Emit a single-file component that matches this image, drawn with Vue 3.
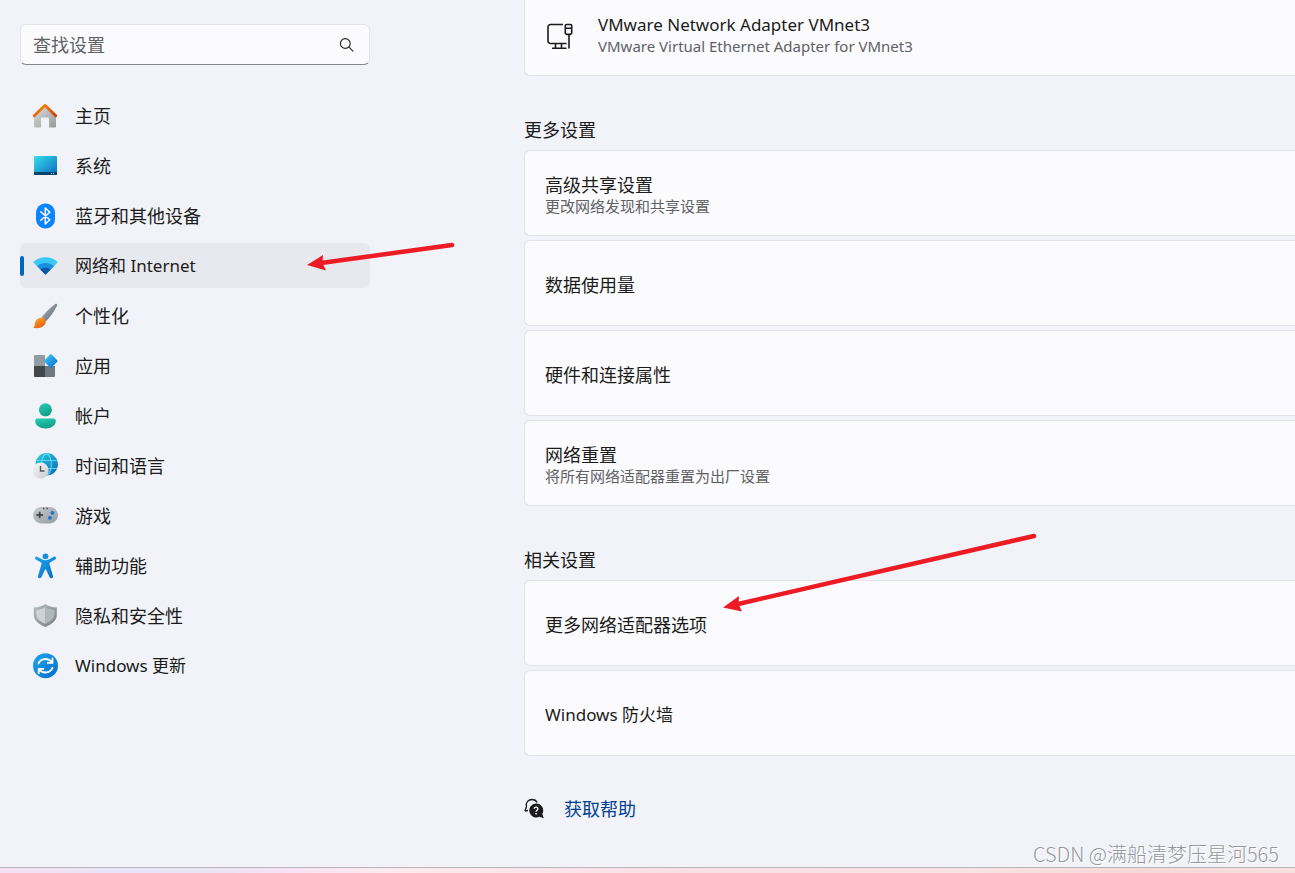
<script setup>
import { ref } from 'vue'

// 搜索关键字
const keyword = ref('')

// 当前选中的菜单
const active = ref('network')

// 左侧菜单
const menus = [
  { key: 'home', label: '主页' },
  { key: 'system', label: '系统' },
  { key: 'bluetooth', label: '蓝牙和其他设备' },
  { key: 'network', label: '网络和 Internet', latin: true },
  { key: 'personal', label: '个性化' },
  { key: 'apps', label: '应用' },
  { key: 'account', label: '帐户' },
  { key: 'time', label: '时间和语言' },
  { key: 'game', label: '游戏' },
  { key: 'access', label: '辅助功能' },
  { key: 'privacy', label: '隐私和安全性' },
  { key: 'update', label: 'Windows 更新', latin: true }
]

// 右侧设置分组
const groups = [
  {
    title: '更多设置',
    items: [
      { title: '高级共享设置', desc: '更改网络发现和共享设置' },
      { title: '数据使用量' },
      { title: '硬件和连接属性' },
      { title: '网络重置', desc: '将所有网络适配器重置为出厂设置' }
    ]
  },
  {
    title: '相关设置',
    items: [
      { title: '更多网络适配器选项' },
      { title: 'Windows 防火墙', latin: true }
    ]
  }
]
</script>

<template>
  <div class="settings-page">
    <div class="settings-body">
      <aside class="sidebar">
        <form class="search-box" @submit.prevent>
          <input v-model="keyword" class="search-input" type="text" placeholder="查找设置" aria-label="查找设置" />
          <button class="search-button" type="submit" aria-label="查找">
            <svg width="16" height="16" viewBox="0 0 16 16" fill="none" stroke="#1f1f1f" stroke-width="1.1" stroke-linecap="round">
              <circle cx="6.3" cy="6.5" r="4.9" />
              <path d="M9.900 10.100L14 14.100" />
            </svg>
          </button>
        </form>

        <nav class="menu">
          <a
            v-for="item in menus"
            :key="item.key"
            href="#"
            class="menu-item"
            :class="{ active: active === item.key, latin: item.latin }"
            @click.prevent="active = item.key"
          >
            <svg v-if="item.key === 'home'" class="menu-icon" viewBox="0 0 26 26">
              <defs>
                <linearGradient id="homeWall" x1="0" y1="0" x2="1" y2="1">
                  <stop offset="0" stop-color="#dedede" />
                  <stop offset="1" stop-color="#999" />
                </linearGradient>
                <linearGradient id="homeRoof" x1="0" y1="0" x2="1" y2="1">
                  <stop offset="0" stop-color="#f9940e" />
                  <stop offset="1" stop-color="#d13c02" />
                </linearGradient>
              </defs>
              <path d="M2 12.500L13 2l11 10.500V23.500a1 1 0 0 1-1 1H17V15.500a1 1 0 0 0-1-1h-6a1 1 0 0 0-1 1v9H3a1 1 0 0 1-1-1z" fill="url(#homeWall)" />
              <path d="M2.200 12.800L13 2.200l10.800 10.600" fill="none" stroke="url(#homeRoof)" stroke-width="2.800" stroke-linecap="round" stroke-linejoin="round" />
            </svg>

            <svg v-else-if="item.key === 'system'" class="menu-icon" viewBox="0 0 26 26">
              <defs>
                <linearGradient id="sysScreen" x1="0" y1="0" x2="1" y2="1">
                  <stop offset="0" stop-color="#36dfe8" />
                  <stop offset="1" stop-color="#0b69c4" />
                </linearGradient>
              </defs>
              <rect x="2" y="3" width="23" height="19" rx="1" fill="url(#sysScreen)" />
              <path d="M2 19h23v2a1 1 0 0 1-1 1H3a1 1 0 0 1-1-1z" fill="#0c4368" />
              <path d="M19 20.500h1M21 20.500h1" stroke="#a6d7ef" />
            </svg>

            <svg v-else-if="item.key === 'bluetooth'" class="menu-icon" viewBox="0 0 26 26">
              <rect x="4" y="0.500" width="19" height="25" rx="9" fill="#0a84ff" />
              <path d="M8.800 8.800l9 8L13.300 21V5l4.500 4.200-9 8" fill="none" stroke="#fff" stroke-width="1.500" stroke-linejoin="round" stroke-linecap="round" />
            </svg>

            <svg v-else-if="item.key === 'network'" class="menu-icon" viewBox="0 0 26 26">
              <path d="M13.500 21.800L1.200 9.200C7.700 2.500 19.300 2.500 25.800 9.200z" fill="#3ac9f5" />
              <path d="M13.500 21.800L5.200 13.200c4.300-4.400 12.300-4.400 16.600 0z" fill="#1b8de0" />
              <path d="M13.500 21.800L8.500 16.600c2.500-2.500 7.500-2.500 10 0z" fill="#0e55a2" />
            </svg>

            <svg v-else-if="item.key === 'personal'" class="menu-icon" viewBox="0 0 26 26">
              <defs>
                <linearGradient id="brushHandle" x1="0" y1="0" x2="1" y2="1">
                  <stop offset="0" stop-color="#b3bbc2" />
                  <stop offset="1" stop-color="#59636d" />
                </linearGradient>
                <linearGradient id="brushTip" x1="0" y1="0" x2="0.600" y2="1">
                  <stop offset="0" stop-color="#ffad35" />
                  <stop offset="1" stop-color="#e8600e" />
                </linearGradient>
              </defs>
              <path d="M23.200 1c1.800-.8 2.600.4 1.700 2.100C22 9 18 14.500 13.700 18.500L9.500 14.500C13.500 9.500 18 4.500 23.200 1z" fill="url(#brushHandle)" />
              <path d="M9.200 14.700c2.600-.2 5 2 4.600 4.600-.7 4.200-6.800 7.200-12.800 5.300 2.500-1.100 1.200-3.700 2.600-6.600 1-2 3-3.200 5.600-3.300z" fill="url(#brushTip)" />
            </svg>

            <svg v-else-if="item.key === 'apps'" class="menu-icon" viewBox="0 0 26 26">
              <defs>
                <linearGradient id="appTile" x1="0" y1="0" x2="1" y2="1">
                  <stop offset="0" stop-color="#41d0fa" />
                  <stop offset="1" stop-color="#0868d3" />
                </linearGradient>
              </defs>
              <path d="M3 2h10v11H2V3a1 1 0 0 1 1-1z" fill="#939ca5" />
              <path d="M2 13h11v11H3a1 1 0 0 1-1-1z" fill="#41464b" />
              <path d="M13 13h10v10a1 1 0 0 1-1 1h-9z" fill="#70777e" />
              <path d="M18 1.400l-5.500 5.800a1.200 1.200 0 0 0 0 1.600l5.500 5.800a1.200 1.200 0 0 0 1.700 0l5.500-5.800a1.200 1.200 0 0 0 0-1.600l-5.500-5.800a1.200 1.200 0 0 0-1.700 0z" fill="url(#appTile)" />
            </svg>

            <svg v-else-if="item.key === 'account'" class="menu-icon" viewBox="0 0 26 26">
              <defs>
                <linearGradient id="person" x1="0" y1="0" x2="0.500" y2="1">
                  <stop offset="0" stop-color="#29cfb4" />
                  <stop offset="1" stop-color="#109e89" />
                </linearGradient>
              </defs>
              <circle cx="13.400" cy="6.800" r="6.500" fill="url(#person)" />
              <path d="M5.500 15.500h16a2.300 2.300 0 0 1 2.300 2.300c0 4.700-4.300 7.700-10.300 7.700S3.200 22.500 3.200 17.800A2.300 2.300 0 0 1 5.500 15.500z" fill="url(#person)" />
            </svg>

            <svg v-else-if="item.key === 'time'" class="menu-icon" viewBox="0 0 26 26">
              <defs>
                <linearGradient id="globe" x1="0" y1="0" x2="1" y2="1">
                  <stop offset="0" stop-color="#2ed0dc" />
                  <stop offset="1" stop-color="#0964bd" />
                </linearGradient>
                <linearGradient id="clock" x1="0" y1="0" x2="1" y2="1">
                  <stop offset="0" stop-color="#f8f8f8" />
                  <stop offset="1" stop-color="#c8cbce" />
                </linearGradient>
              </defs>
              <circle cx="14.700" cy="11.300" r="11.200" fill="url(#globe)" />
              <g fill="none" stroke="#5ed9ef" stroke-width="1.100">
                <ellipse cx="14.500" cy="11.500" rx="4.800" ry="10.600" />
                <path d="M4.500 7.500h20M4 15.500h21" />
              </g>
              <circle cx="8.700" cy="17.500" r="8" fill="url(#clock)" />
              <path d="M8.500 13v5h4" fill="none" stroke="#50565c" stroke-width="1.400" />
            </svg>

            <svg v-else-if="item.key === 'game'" class="menu-icon" viewBox="0 0 26 26">
              <defs>
                <linearGradient id="pad" x1="0" y1="0" x2="1" y2="1">
                  <stop offset="0" stop-color="#c8ccd0" />
                  <stop offset="1" stop-color="#939ba2" />
                </linearGradient>
              </defs>
              <rect x="1" y="4" width="25" height="16.500" rx="8.200" fill="url(#pad)" />
              <path d="M4.400 12h6.600M7.700 8.700v6.600" stroke="#454b50" stroke-width="1.800" />
              <circle cx="20.400" cy="9.800" r="1.900" fill="#1379cf" />
              <circle cx="17.900" cy="14.800" r="1.900" fill="#1379cf" />
              <path d="M11 5.500h1.400M14.500 5.500h1.400" stroke="#454b50" stroke-width="1.400" />
            </svg>

            <svg v-else-if="item.key === 'access'" class="menu-icon" viewBox="0 0 26 26">
              <defs>
                <linearGradient id="human" x1="0" y1="0" x2="1" y2="1">
                  <stop offset="0" stop-color="#21a7ed" />
                  <stop offset="1" stop-color="#066cc8" />
                </linearGradient>
              </defs>
              <circle cx="13.500" cy="3.300" r="2.900" fill="#168ede" />
              <path d="M5.200 3.800l5 2.700c2 .9 4.600.9 6.600 0l5-2.700c2-.9 3 1.800 1.400 2.700l-5.200 3c-.5.300-.7.900-.5 1.400l3.500 12c.6 2.300-2.400 3.400-3.400 1.400l-3.500-7.500c-.2-.5-1-.5-1.200 0l-3.500 7.500c-1 2-4 .9-3.400-1.400l3.500-12c.2-.5 0-1.100-.5-1.400l-5.200-3c-1.600-.9-.6-3.600 1.400-2.700z" fill="url(#human)" />
            </svg>

            <svg v-else-if="item.key === 'privacy'" class="menu-icon" viewBox="0 0 26 26">
              <defs>
                <linearGradient id="shield" x1="0" y1="0" x2="1" y2="1">
                  <stop offset="0" stop-color="#b7bdc2" />
                  <stop offset="1" stop-color="#787f85" />
                </linearGradient>
              </defs>
              <path d="M13.300 1c3.200 2.500 6.800 3.300 11.500 3.500V12c0 5.200-4.800 9.500-11.500 12C6.600 21.500 1.800 17.200 1.800 12V4.500C6.500 4.300 10.100 3.500 13.300 1z" fill="url(#shield)" />
              <path d="M13.300 4v16.800C8.300 18.500 4.300 15.700 4.300 11.500V7c3.500-.3 6.500-1.200 9-3z" fill="#d0d3d5" />
              <path d="M13.300 4v16.800c5-2.300 9-5.100 9-9.300V7c-3.500-.3-6.500-1.200-9-3z" fill="#b2b7bb" />
            </svg>

            <svg v-else class="menu-icon" viewBox="0 0 26 26">
              <defs>
                <linearGradient id="refresh" x1="0" y1="0" x2="1" y2="1">
                  <stop offset="0" stop-color="#20a7ed" />
                  <stop offset="1" stop-color="#066ccd" />
                </linearGradient>
              </defs>
              <circle cx="13.500" cy="12.700" r="12.500" fill="url(#refresh)" />
              <g fill="none" stroke="#fff" stroke-width="1.800" stroke-linecap="round" stroke-linejoin="round">
                <path d="M6.500 10.500C8.500 5.300 16 4.300 20 9.200M20.500 5.500v4.400h-4.700" />
                <path d="M20.500 14.800c-2 5.400-9.500 6.400-13.500 1.600M6.700 20.300v-4.500h4.700" />
              </g>
            </svg>
            <span>{{ item.label }}</span>
          </a>
        </nav>
      </aside>

      <main class="content">
        <button class="card adapter-card" type="button">
          <svg class="adapter-icon" width="28" height="28" viewBox="0 0 28 28" fill="none" stroke="#1b1b1b" stroke-width="1.600" stroke-linejoin="round">
            <path d="M18 2.500H5.500A2.500 2.500 0 0 0 3 5v14a2.500 2.500 0 0 0 2.500 2.500H21.500M10.500 21.500v4.500M16.500 21.500v4.500M7 26.200h14.500" />
            <path d="M21.500 2.500h4a1.200 1.200 0 0 1 1.200 1.200v7.500l-1.200 1.200h-4l-1.200-1.200V3.700a1.200 1.200 0 0 1 1.200-1.200zM20.300 6.200h6.400M24 12.500v14" />
          </svg>
          <span class="card-text">
            <span class="card-title latin">VMware Network Adapter VMnet3</span>
            <span class="card-desc">VMware Virtual Ethernet Adapter for VMnet3</span>
          </span>
        </button>

        <section v-for="group in groups" :key="group.title" class="group">
          <h2 class="group-title">{{ group.title }}</h2>
          <div class="card-list">
            <button v-for="item in group.items" :key="item.title" class="card" type="button">
              <span class="card-text">
                <span class="card-title" :class="{ latin: item.latin }">{{ item.title }}</span>
                <span v-if="item.desc" class="card-desc">{{ item.desc }}</span>
              </span>
            </button>
          </div>
        </section>

        <div class="help">
          <svg width="20" height="22" viewBox="0 0 20 22">
            <path d="M1 13l1.500-4.500C1.500 4 4.500 1.500 8 1.500c2.500 0 4.300 1.200 5.200 3M1 13l3-.5" fill="none" stroke="#1b1b1b" stroke-width="1.300" stroke-linejoin="round" />
            <path d="M12 5.500a7 7 0 1 0 3.500 13.200l4.300 1.500-1.500-4.300A7 7 0 0 0 12 5.500z" fill="#1b1b1b" />
            <path d="M10.300 10.800c0-2.300 3.600-2.200 3.600 0 0 1.500-1.800 1.500-1.800 3M12.100 15v1.500" fill="none" stroke="#fff" stroke-width="1.400" />
          </svg>
          <a href="#" class="help-link" @click.prevent>获取帮助</a>
        </div>
      </main>
    </div>

    <div class="bottom-strip"></div>

    <!-- 标注箭头 -->
    <svg class="arrow arrow-menu" width="150" height="32" viewBox="0 0 150 32">
      <path d="M16 22L147 4" stroke="#ed1c24" stroke-width="4.500" stroke-linecap="round" />
      <path d="M2 24L18 14L17.500 22L21 29.500z" fill="#ed1c24" />
    </svg>
    <svg class="arrow arrow-card" width="316" height="80" viewBox="0 0 316 80">
      <path d="M14 72.500L312 4" stroke="#ed1c24" stroke-width="4.500" stroke-linecap="round" />
      <path d="M1 75.500L17 64L16.500 72L20 79.500z" fill="#ed1c24" />
    </svg>
    <div class="watermark">CSDN @满船清梦压星河565</div>
  </div>
</template>

<style>
body {
  margin: 0;
  background: #f1f3f8;
}
</style>

<style scoped>
.settings-page {
  position: relative;
  display: flex;
  flex-direction: column;
  min-height: 100vh;
  overflow: hidden;
  background: #f1f3f8;
  color: #1b1b1b;
  font-family: "Noto Sans", "Noto Sans CJK SC", sans-serif;
  font-size: 18px;
  line-height: 24px;
}

button,
input {
  font: inherit;
  color: inherit;
}

.settings-body {
  display: flex;
  flex: 1;
  gap: 154px;
  padding-left: 20px;
}

.sidebar {
  flex: 0 0 350px;
  padding-top: 24px;
}

.search-box {
  display: flex;
  align-items: center;
  box-sizing: border-box;
  height: 41px;
  padding: 0 14px 0 12px;
  border: 1px solid #e3e4ea;
  border-bottom-color: #85868a;
  border-radius: 6px;
  background: #fbfbfd;
}

.search-input {
  flex: 1;
  min-width: 0;
  padding: 0;
  border: none;
  outline: none;
  background: transparent;
}

.search-input::placeholder {
  color: #606165;
  opacity: 1;
}

.search-button {
  display: flex;
  padding: 0;
  border: none;
  background: transparent;
  cursor: pointer;
}

.menu {
  display: flex;
  flex-direction: column;
  gap: 5px;
  margin-top: 28px;
}

.menu-item {
  position: relative;
  display: flex;
  align-items: center;
  gap: 17px;
  height: 45px;
  padding-left: 12px;
  border-radius: 6px;
  color: inherit;
  text-decoration: none;
}

.menu-item:hover,
.menu-item.active {
  background: #e8e9ee;
}

.menu-item.active::before {
  content: '';
  position: absolute;
  left: 0;
  top: 13px;
  width: 4px;
  height: 20px;
  border-radius: 2px;
  background: #0067c0;
}

.menu-icon {
  width: 26px;
  height: 26px;
}

/* 含英文的文字略小一号 */
.latin {
  font-size: 17px;
}

.content {
  flex: 1;
  min-width: 0;
}

.card {
  display: flex;
  align-items: center;
  box-sizing: border-box;
  width: 100%;
  height: 86px;
  padding: 4px 20px 0;
  border: 1px solid #e3e4ea;
  border-right: none;
  border-radius: 6px 0 0 6px;
  background: #fbfbfd;
  text-align: left;
}

.adapter-card {
  height: 76px;
  padding: 0 20px 4px;
  border-top: none;
  border-radius: 0 0 0 6px;
}

.adapter-icon {
  margin-right: 25px;
}

.card-text {
  display: flex;
  flex-direction: column;
}

.card-desc {
  padding-bottom: 3px;
  color: #606165;
  font-size: 15px;
  line-height: 18px;
}

.group-title {
  margin: 0;
  padding: 42px 0 8px;
  font-size: 18px;
  font-weight: 400;
  line-height: 24px;
}

.card-list {
  display: flex;
  flex-direction: column;
  gap: 4px;
}

.help {
  display: flex;
  align-items: center;
  gap: 20px;
  padding: 41px 0;
}

.help-link {
  color: #003e92;
  text-decoration: none;
}

.bottom-strip {
  height: 5px;
  border-top: 1px solid #b9b4bc;
  background: linear-gradient(90deg, #f7e0f7, #e9e4f7 8%, #eae4f7 16%, #f8e2f5 22%, #fcebf0 30%, #fbdfe6 52%, #fae3e4 75%, #f6d9d6 88%, #f8e0e0);
}

.arrow {
  position: absolute;
  pointer-events: none;
}

.arrow-menu {
  left: 305px;
  top: 241px;
}

.arrow-card {
  left: 722px;
  top: 532px;
}

.watermark {
  position: absolute;
  right: 16px;
  bottom: 7px;
  color: #97989c;
  font-family: "Noto Sans CJK SC", sans-serif;
  font-size: 20px;
  font-weight: 300;
  text-shadow: 1px 1px 0 #fff;
}
</style>
